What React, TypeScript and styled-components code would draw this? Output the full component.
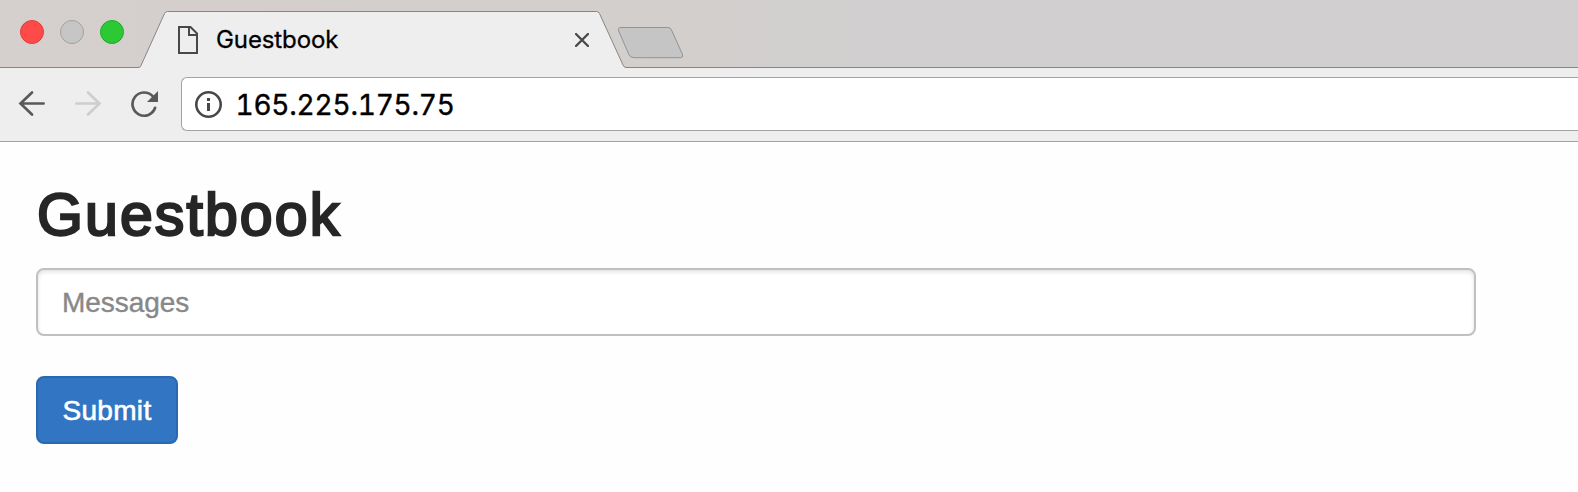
import React from "react";
import styled, { createGlobalStyle } from "styled-components";

const GlobalStyle = createGlobalStyle`
  * { box-sizing: border-box; }
  body { margin: 0; background: #fefefe; overflow: hidden; }
`;

const Window = styled.div`
  width: 100%;
  height: 492px;
  overflow: hidden;
  background: #fefefe;
`;

const TabStrip = styled.header`
  display: flex;
  height: 68px;
  border-bottom: 1px solid #868686;
  background: linear-gradient(90deg, #d5cfcd 0%, #d3cfcd 40%, #d1cfcf 55%, #d1cfd0 100%);
`;

const WindowControls = styled.div`
  display: flex;
  flex: none;
  gap: 16px;
  width: 139px;
  padding: 20px 0 0 20px;
`;

const ControlDot = styled.span<{ $fill: string; $edge: string }>`
  width: 24px;
  height: 24px;
  border-radius: 50%;
  background: ${(p) => p.$fill};
  border: 1px solid ${(p) => p.$edge};
`;

const Tab = styled.div`
  position: relative;
  flex: none;
  display: flex;
  align-items: center;
  width: 487px;
  height: 68px;
  padding: 12px 37px 0 38px;
`;

const TabShape = styled.svg`
  position: absolute;
  inset: 0;
`;

const TabContent = styled.div`
  position: relative;
  display: flex;
  align-items: center;
  width: 100%;
`;

const TabTitle = styled.span`
  flex: 1;
  margin-left: 17px;
  font: 400 24px/30px Inter, sans-serif;
  letter-spacing: -0.1px;
  color: #000;
  -webkit-text-stroke: 0.3px #000;
`;

const NewTab = styled.svg`
  flex: none;
  margin: 26px 0 0 -10px;
`;

const Toolbar = styled.nav`
  display: flex;
  height: 74px;
  padding: 9px 0 0 18px;
  background: #eee;
  border-bottom: 1px solid #a3a3a3;
`;

const NavButtons = styled.div`
  display: flex;
  flex: none;
  gap: 28px;
  width: 163px;
  padding-top: 13px;
`;

const NavIcon = styled.svg`
  flex: none;
  width: 28px;
  height: 28px;
`;

const AddressBar = styled.div`
  display: flex;
  flex: 1;
  height: 54px;
  padding: 13px 0 0 13px;
  border: 1px solid #a3a3a3;
  border-right: 0;
  border-radius: 6px 0 0 6px;
  background: #fff;
`;

const Address = styled.span`
  margin-left: 12.5px;
  font: 400 28px/29px Inter, sans-serif;
  font-variant-numeric: tabular-nums;
  letter-spacing: -0.22px;
  color: #000;
  -webkit-text-stroke: 0.4px #000;
`;

const Page = styled.main`
  padding: 40px 102px 0 36px;
  font-family: "Liberation Sans", Arial, sans-serif;
`;

const Heading = styled.h1`
  margin: 0 0 20px;
  padding-left: 1px;
  font-size: 59px;
  font-weight: 400;
  line-height: 66px;
  letter-spacing: 2.1px;
  color: #262626;
  -webkit-text-stroke: 2.4px #262626;
`;

const MessageField = styled.input`
  display: block;
  width: 100%;
  height: 68px;
  padding: 1px 24px 0;
  border: 2px solid #c0c0c0;
  border-radius: 8px;
  background: #fff;
  box-shadow: inset 0 2px 4px rgba(0, 0, 0, 0.12);
  font: 400 28px "Liberation Sans", Arial, sans-serif;
  outline: none;

  &::placeholder {
    color: #888;
    opacity: 1;
    letter-spacing: -0.05px;
    -webkit-text-stroke: 0.4px #888;
  }
`;

const SubmitButton = styled.button`
  display: block;
  width: 142px;
  height: 68px;
  margin-top: 40px;
  padding: 1px 0 0;
  border: 2px solid #2a68b1;
  border-radius: 8px;
  background: #3276c3;
  color: #fff;
  font: 400 28px "Liberation Sans", Arial, sans-serif;
  letter-spacing: 0.3px;
  -webkit-text-stroke: 0.6px #fff;
`;

export default function App() {
  return (
    <Window>
      <GlobalStyle />
      <TabStrip>
        <WindowControls>
          <ControlDot $fill="#fe4a49" $edge="#e13b3b" />
          <ControlDot $fill="#c6c6c6" $edge="#a1a1a1" />
          <ControlDot $fill="#2bc933" $edge="#20a829" />
        </WindowControls>
        <Tab>
          <TabShape width="487" height="68" viewBox="0 0 487 68">
            <path d="M0 68V67.5Q1.3 67.2 2 65.5L25.5 13.5Q26.5 11.5 28.5 11.5H457.500Q459.500 11.500 460.500 13.500L484 65Q485.200 67.500 487 67.500V68Z" fill="#eee" />
            <path d="M0 67.5Q1.300 67.200 2 65.500L25.500 13.500Q26.500 11.500 28.500 11.500H457.500Q459.500 11.500 460.500 13.500L484 65Q485.200 67.500 487 67.500" fill="none" stroke="#868686" />
          </TabShape>
          <TabContent>
            <svg width="22" height="28" viewBox="0 0 22 28" fill="none" stroke="#484848" strokeWidth="2">
              <path d="M2 1H13.500L20 7.500V27H2ZM12 1V9H20" />
            </svg>
            <TabTitle>Guestbook</TabTitle>
            <svg width="14" height="14" viewBox="0 0 14 14" stroke="#484848" strokeWidth="2.300" strokeLinecap="round">
              <path d="M1 1L13 13M13 1L1 13" />
            </svg>
          </TabContent>
        </Tab>
        <NewTab width="70" height="34" viewBox="0 0 70 34">
          <path d="M5 1.500H52Q54.500 1.500 55.500 4L66.500 28.500Q67.500 31.700 64.500 31.700H18Q14.500 31.700 13 28.800L2.700 5Q1.500 1.500 5 1.500Z" fill="#c5c5c5" stroke="#939393" />
        </NewTab>
      </TabStrip>
      <Toolbar>
        <NavButtons>
          <NavIcon viewBox="0 0 28 28" fill="none" stroke="#595959" strokeWidth="2.700" strokeLinecap="round">
            <path d="M25.600 13.500H3M14 2.500L2.500 13.500L14 24.500" />
          </NavIcon>
          <NavIcon viewBox="0 0 28 28" fill="none" stroke="#cecece" strokeWidth="2.700" strokeLinecap="round">
            <path d="M2.400 13.500H25M14 2.500L25.500 13.500L14 24.500" />
          </NavIcon>
          <NavIcon viewBox="0 0 28 28" fill="none" stroke="#595959" strokeWidth="2.700" strokeLinecap="round">
            <path d="M22.600 6.200A11.600 11.600 0 1 0 25.100 17.800" />
            <path d="M28 1V12H17Z" fill="#595959" stroke="none" />
          </NavIcon>
        </NavButtons>
        <AddressBar>
          <svg width="28" height="28" viewBox="0 0 28 28">
            <circle cx="13.500" cy="13.500" r="12.200" fill="none" stroke="#484848" strokeWidth="2.600" />
            <path d="M12 7H15V10H12ZM12 12H15V20H12Z" fill="#484848" />
          </svg>
          <Address>165.225.175.75</Address>
        </AddressBar>
      </Toolbar>
      <Page>
        <Heading>Guestbook</Heading>
        <MessageField type="text" placeholder="Messages" />
        <SubmitButton type="button">Submit</SubmitButton>
      </Page>
    </Window>
  );
}
